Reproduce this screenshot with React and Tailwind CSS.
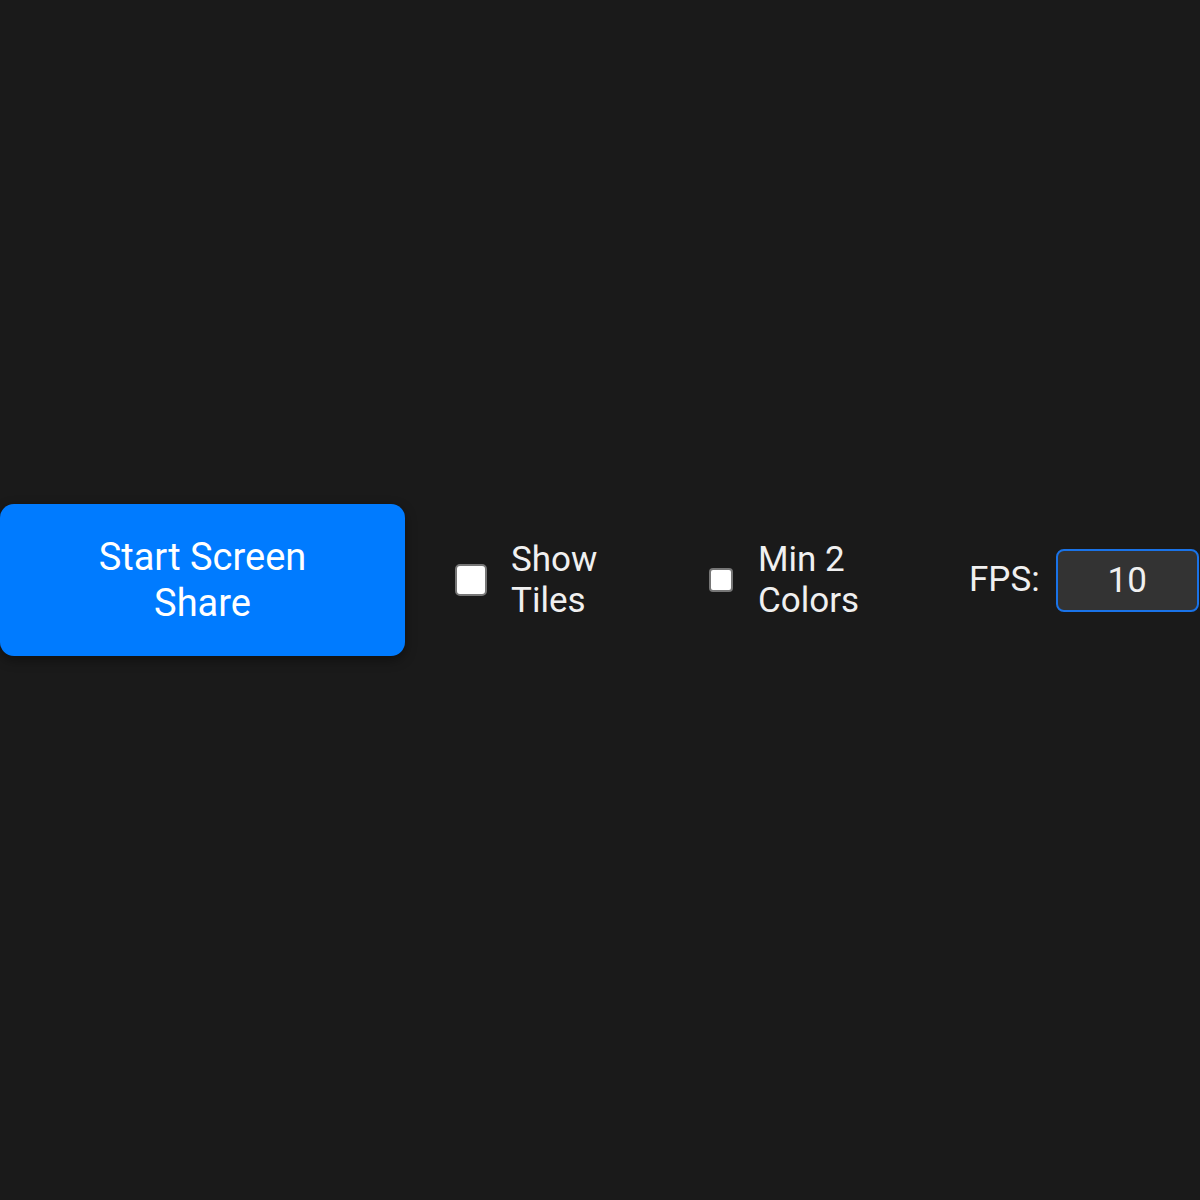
import { useState } from 'react';

const App = () => {
    const [showTiles, setShowTiles] = useState(false);
    const [minColors, setMinColors] = useState(false);
    const [fps, setFps] = useState(10);

    return (
        <div className="min-h-[1200px] w-[1200px] overflow-hidden bg-[#1a1a1a] text-white font-['Roboto',sans-serif] flex items-center pb-10">
            {/* Toolbar */}
            <div className="flex items-center">
                <button className="w-[405px] h-[152px] shrink-0 rounded-[14px] bg-[#007bff] text-[38px] leading-[46px] text-white px-16 shadow-[0_4px_12px_rgba(0,0,0,0.4)]">
                    Start Screen Share
                </button>

                <label className="ml-[50px] w-[200px] shrink-0 flex items-center gap-6 text-[35px] leading-[41px] text-[#f0f0f0]">
                    <input
                        type="checkbox"
                        checked={showTiles}
                        onChange={(e) => setShowTiles(e.target.checked)}
                        className="appearance-none w-8 h-8 shrink-0 rounded-[5px] bg-white border-2 border-[#767676]"
                    />
                    <span className="w-[90px]">Show Tiles</span>
                </label>

                <label className="ml-[54px] w-[190px] shrink-0 flex items-center gap-[25px] text-[35px] leading-[41px] text-[#f0f0f0]">
                    <input
                        type="checkbox"
                        checked={minColors}
                        onChange={(e) => setMinColors(e.target.checked)}
                        className="appearance-none w-6 h-6 shrink-0 rounded-[4px] bg-white border-2 border-[#767676]"
                    />
                    <span className="w-[110px]">Min 2 Colors</span>
                </label>

                <div className="ml-[70px] flex items-center gap-4 shrink-0">
                    <span className="text-[35px] text-[#f0f0f0]">FPS:</span>
                    <input
                        type="number"
                        value={fps}
                        onChange={(e) => setFps(e.target.value)}
                        className="w-[143px] h-[63px] rounded-lg bg-[#333333] border-2 border-[#1a73e8] text-center text-[35px] text-[#f0f0f0] outline-none [appearance:textfield] [&::-webkit-inner-spin-button]:appearance-none"
                    />
                </div>
            </div>
        </div>
    );
};

export default App;
